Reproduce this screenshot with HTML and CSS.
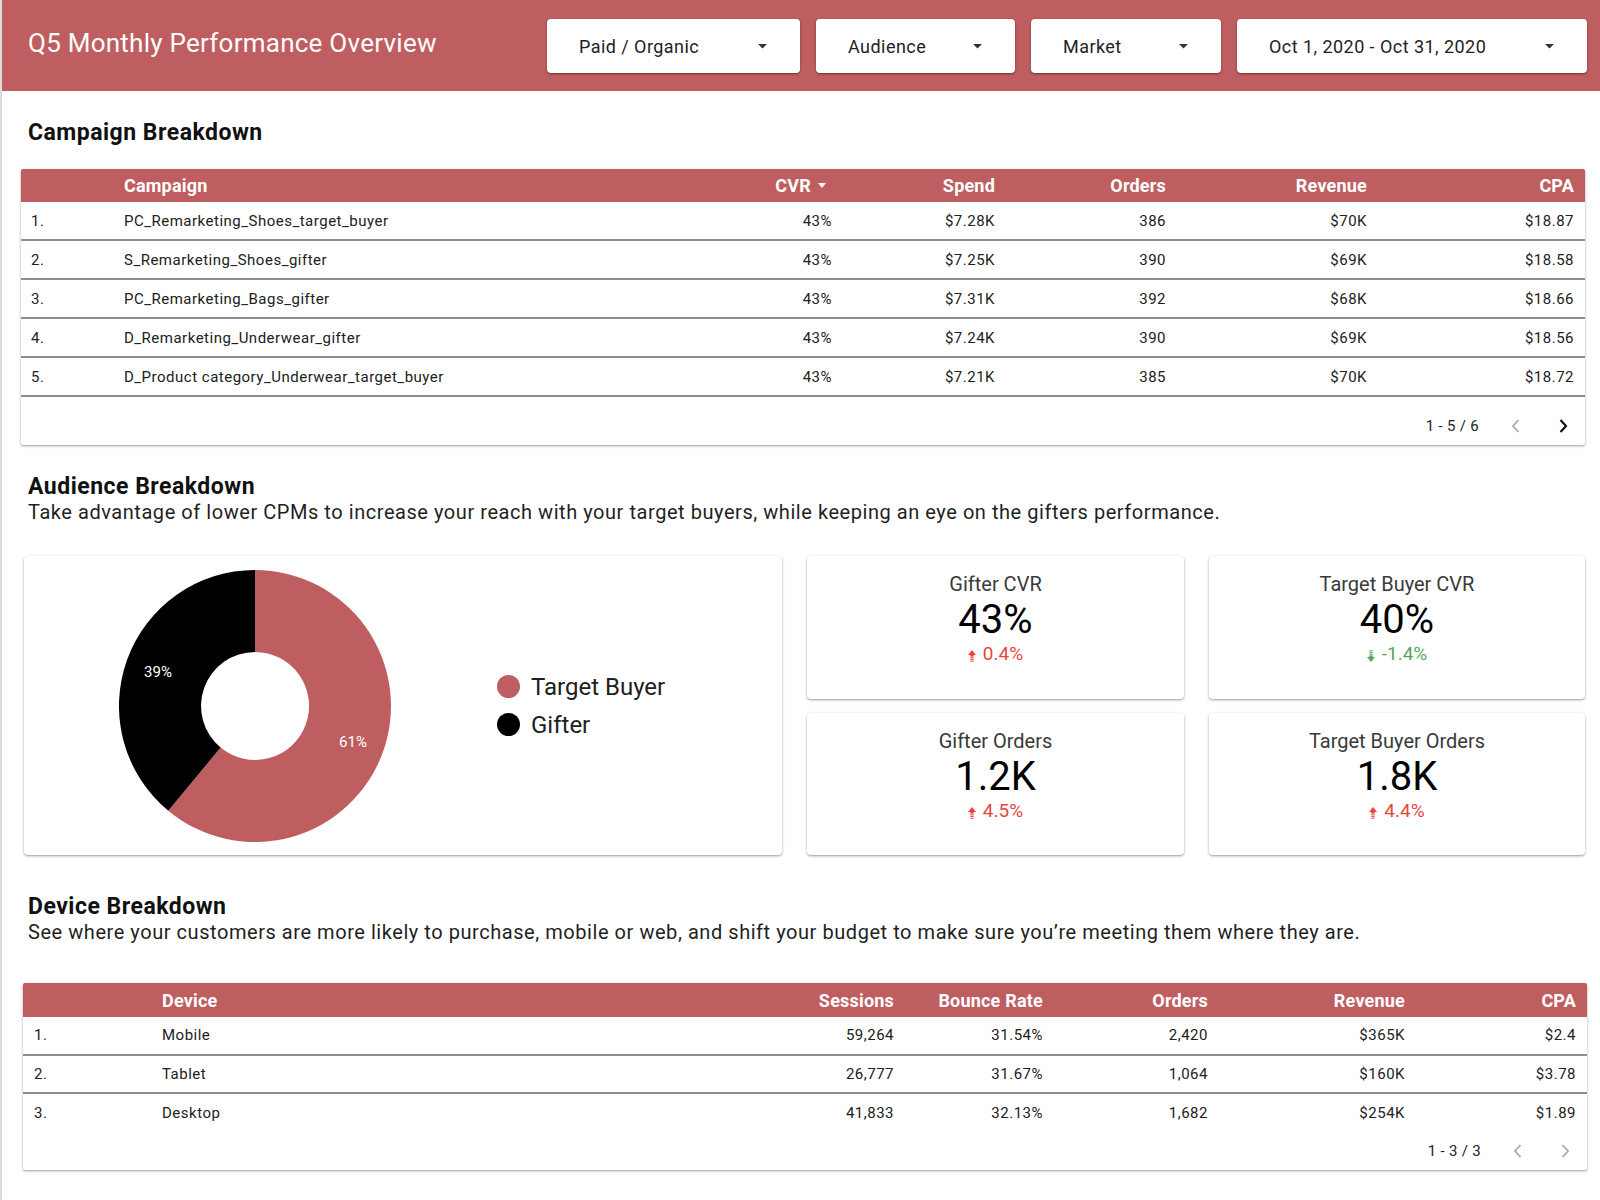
FILE: index.html
```html
<!DOCTYPE html>
<html lang="en">
<head>
<meta charset="utf-8">
<title>Q5 Monthly Performance Overview</title>
<link rel="stylesheet" href="styles.css">
</head>
<body>
<div class="page">
  <header class="topbar">
    <h1 class="app-title">Q5 Monthly Performance Overview</h1>
    <div class="filters">
      <div class="dropdown dd-paid"><span>Paid / Organic</span><svg class="dd-arrow" width="9" height="5" viewBox="0 0 9 5"><path d="M0 0L4.5 4.5L9 0Z"/></svg></div>
      <div class="dropdown dd-aud"><span>Audience</span><svg class="dd-arrow" width="9" height="5" viewBox="0 0 9 5"><path d="M0 0L4.5 4.5L9 0Z"/></svg></div>
      <div class="dropdown dd-mkt"><span>Market</span><svg class="dd-arrow" width="9" height="5" viewBox="0 0 9 5"><path d="M0 0L4.5 4.5L9 0Z"/></svg></div>
      <div class="dropdown dd-date"><span>Oct 1, 2020 - Oct 31, 2020</span><svg class="dd-arrow" width="9" height="5" viewBox="0 0 9 5"><path d="M0 0L4.5 4.5L9 0Z"/></svg></div>
    </div>
  </header>

  <h2 class="section-title first">Campaign Breakdown</h2>
  <div class="table campaign-table">
    <div class="trow thead">
      <div></div><div class="l">Campaign</div><div class="r sort">CVR <svg width="8" height="5" viewBox="0 0 8 5"><path d="M0 0L4 5L8 0Z" fill="#fff"/></svg></div><div class="r">Spend</div><div class="r">Orders</div><div class="r">Revenue</div><div class="r">CPA</div>
    </div>
    <div class="trow line"><div>1.</div><div class="l">PC_Remarketing_Shoes_target_buyer</div><div class="r">43%</div><div class="r">$7.28K</div><div class="r">386</div><div class="r">$70K</div><div class="r">$18.87</div></div>
    <div class="trow line"><div>2.</div><div class="l">S_Remarketing_Shoes_gifter</div><div class="r">43%</div><div class="r">$7.25K</div><div class="r">390</div><div class="r">$69K</div><div class="r">$18.58</div></div>
    <div class="trow line"><div>3.</div><div class="l">PC_Remarketing_Bags_gifter</div><div class="r">43%</div><div class="r">$7.31K</div><div class="r">392</div><div class="r">$68K</div><div class="r">$18.66</div></div>
    <div class="trow line"><div>4.</div><div class="l">D_Remarketing_Underwear_gifter</div><div class="r">43%</div><div class="r">$7.24K</div><div class="r">390</div><div class="r">$69K</div><div class="r">$18.56</div></div>
    <div class="trow line"><div>5.</div><div class="l">D_Product category_Underwear_target_buyer</div><div class="r">43%</div><div class="r">$7.21K</div><div class="r">385</div><div class="r">$70K</div><div class="r">$18.72</div></div>
    <div class="tfoot tall">
      <span class="pg-text">1 - 5 / 6</span>
      <span class="chev"><svg width="24" height="24" viewBox="0 0 24 24"><polyline points="14.5,6 9,12 14.5,18" fill="none" stroke="#a8a8a8" stroke-width="1.8"/></svg></span>
      <span class="chev"><svg width="24" height="24" viewBox="0 0 24 24"><polyline points="9.5,6 15,12 9.5,18" fill="none" stroke="#111" stroke-width="2.2"/></svg></span>
    </div>
  </div>

  <h2 class="section-title">Audience Breakdown</h2>
  <p class="section-sub">Take advantage of lower CPMs to increase your reach with your target buyers, while keeping an eye on the gifters performance.</p>

  <div class="audience-grid">
    <div class="card donut-card">
      <svg class="donut" width="272" height="272" viewBox="0 0 272 272">
        <path d="M136 0 A136 136 0 1 1 49.3 240.8 L101.6 177.6 A54 54 0 1 0 136 82 Z" fill="#bf5e60"/>
        <path d="M49.3 240.8 A136 136 0 0 1 136 0 L136 82 A54 54 0 0 0 101.6 177.6 Z" fill="#000"/>
        <text x="39" y="107" class="donut-label" text-anchor="middle">39%</text>
        <text x="234" y="177" class="donut-label" text-anchor="middle">61%</text>
      </svg>
      <ul class="legend">
        <li><span class="dot red"></span>Target Buyer</li>
        <li><span class="dot black"></span>Gifter</li>
      </ul>
    </div>
    <div class="card kpi">
      <div class="kpi-label">Gifter CVR</div>
      <div class="kpi-value">43%</div>
      <div class="kpi-delta up"><svg width="8" height="12" viewBox="0 0 8 12"><path d="M0 5L4 0L8 5Z"/><rect x="2.3" y="5" width="3.4" height="1.6"/><rect x="2.3" y="7.3" width="3.4" height="1.1"/><rect x="2.3" y="9.1" width="3.4" height="1"/><rect x="2.3" y="10.8" width="3.4" height="0.9"/></svg>0.4%</div>
    </div>
    <div class="card kpi">
      <div class="kpi-label">Target Buyer CVR</div>
      <div class="kpi-value">40%</div>
      <div class="kpi-delta down"><svg width="8" height="12" viewBox="0 0 8 12"><path d="M0 7L4 12L8 7Z"/><rect x="2.3" y="5.4" width="3.4" height="1.6"/><rect x="2.3" y="3.6" width="3.4" height="1.1"/><rect x="2.3" y="1.9" width="3.4" height="1"/><rect x="2.3" y="0.3" width="3.4" height="0.9"/></svg>-1.4%</div>
    </div>
    <div class="card kpi">
      <div class="kpi-label">Gifter Orders</div>
      <div class="kpi-value">1.2K</div>
      <div class="kpi-delta up"><svg width="8" height="12" viewBox="0 0 8 12"><path d="M0 5L4 0L8 5Z"/><rect x="2.3" y="5" width="3.4" height="1.6"/><rect x="2.3" y="7.3" width="3.4" height="1.1"/><rect x="2.3" y="9.1" width="3.4" height="1"/><rect x="2.3" y="10.8" width="3.4" height="0.9"/></svg>4.5%</div>
    </div>
    <div class="card kpi">
      <div class="kpi-label">Target Buyer Orders</div>
      <div class="kpi-value">1.8K</div>
      <div class="kpi-delta up"><svg width="8" height="12" viewBox="0 0 8 12"><path d="M0 5L4 0L8 5Z"/><rect x="2.3" y="5" width="3.4" height="1.6"/><rect x="2.3" y="7.3" width="3.4" height="1.1"/><rect x="2.3" y="9.1" width="3.4" height="1"/><rect x="2.3" y="10.8" width="3.4" height="0.9"/></svg>4.4%</div>
    </div>
  </div>

  <h2 class="section-title device">Device Breakdown</h2>
  <p class="section-sub">See where your customers are more likely to purchase, mobile or web, and shift your budget to make sure you’re meeting them where they are.</p>

  <div class="table device-table">
    <div class="trow thead">
      <div></div><div class="l">Device</div><div class="r">Sessions</div><div class="r">Bounce Rate</div><div class="r">Orders</div><div class="r">Revenue</div><div class="r">CPA</div>
    </div>
    <div class="trow line"><div>1.</div><div class="l">Mobile</div><div class="r">59,264</div><div class="r">31.54%</div><div class="r">2,420</div><div class="r">$365K</div><div class="r">$2.4</div></div>
    <div class="trow line"><div>2.</div><div class="l">Tablet</div><div class="r">26,777</div><div class="r">31.67%</div><div class="r">1,064</div><div class="r">$160K</div><div class="r">$3.78</div></div>
    <div class="trow"><div>3.</div><div class="l">Desktop</div><div class="r">41,833</div><div class="r">32.13%</div><div class="r">1,682</div><div class="r">$254K</div><div class="r">$1.89</div></div>
    <div class="tfoot short">
      <span class="pg-text">1 - 3 / 3</span>
      <span class="chev"><svg width="24" height="24" viewBox="0 0 24 24"><polyline points="14.5,6 9,12 14.5,18" fill="none" stroke="#a8a8a8" stroke-width="1.8"/></svg></span>
      <span class="chev"><svg width="24" height="24" viewBox="0 0 24 24"><polyline points="9.5,6 15,12 9.5,18" fill="none" stroke="#a8a8a8" stroke-width="1.8"/></svg></span>
    </div>
  </div>
</div>
</body>
</html>
```

FILE: styles.css
```css
* { box-sizing: border-box; }

html, body {
  margin: 0;
  padding: 0;
  background: #ffffff;
}

body {
  font-family: Roboto, "Liberation Sans", Arial, sans-serif;
  color: #212121;
}

.page {
  border-left: 2px solid #dcdcdc;
  min-height: 1200px;
  padding-bottom: 20px;
}

/* ---------- top bar ---------- */
.topbar {
  height: 91px;
  background: #bf5e60;
  display: flex;
  align-items: center;
  padding: 0 13px 0 26px;
}

.app-title {
  margin: 0 0 5px 0;
  font-size: 26px;
  font-weight: 400;
  line-height: 30px;
  letter-spacing: 0.25px;
  color: #ffffff;
  white-space: nowrap;
}

.filters {
  margin-left: auto;
  display: flex;
  gap: 16px;
  padding-top: 1px;
}

.dropdown {
  height: 54px;
  background: #ffffff;
  border-radius: 4px;
  box-shadow: 0 1px 2px rgba(0, 0, 0, 0.35), 0 1px 3px rgba(0, 0, 0, 0.15);
  display: flex;
  align-items: center;
  justify-content: space-between;
  padding: 0 33px 0 32px;
  font-size: 18px;
  letter-spacing: 0.45px;
  color: #222222;
}

.dd-arrow { fill: #333333; }

.dd-paid { width: 253px; }
.dd-aud { width: 199px; }
.dd-mkt { width: 190px; }
.dd-date { width: 350px; }

/* ---------- section headings ---------- */
.section-title {
  margin: 29px 0 0 26px;
  font-size: 23px;
  font-weight: 700;
  line-height: 26px;
  letter-spacing: 0.5px;
  color: #111111;
}

.section-title.device { margin-top: 39px; }

.section-sub {
  margin: 0 0 0 26px;
  font-size: 20px;
  line-height: 24px;
  letter-spacing: 0.55px;
  color: #1f1f1f;
}

/* ---------- tables ---------- */
.table {
  width: 1564px;
  background: #ffffff;
  border-radius: 2px;
  box-shadow: 0 1px 2px rgba(0, 0, 0, 0.3), 0 1px 4px rgba(0, 0, 0, 0.12);
  overflow: hidden;
}

.campaign-table {
  margin: 23px 0 0 19px;
}

.device-table {
  margin: 39px 0 0 21px;
}

.trow {
  display: grid;
  align-items: center;
  font-size: 15px;
  letter-spacing: 0.5px;
  color: #212121;
}

.campaign-table .trow {
  grid-template-columns: 93px 1fr 140px 163px 171px 201px 207px;
  padding: 0 11px 0 10px;
  height: 39px;
}

.device-table .trow {
  grid-template-columns: 128px 1fr 140px 149px 165px 197px 171px;
  padding: 0 11px 0 11px;
  height: 38.5px;
}

.trow .r { text-align: right; }
.trow .l { text-align: left; }

.trow.line { border-bottom: 2px solid #8e8e8e; }

.trow.thead {
  background: #bf5e60;
  color: #ffffff;
  font-size: 18px;
  font-weight: 700;
  letter-spacing: 0.2px;
}

.campaign-table .trow.thead { height: 33px; }
.device-table .trow.thead { height: 34px; }

.sort {
  display: flex;
  align-items: center;
  justify-content: flex-end;
  gap: 7px;
  padding-right: 6px;
}

.tfoot {
  display: flex;
  align-items: center;
  justify-content: flex-end;
  padding-right: 10px;
  font-size: 15px;
  color: #222222;
}

.tfoot.tall { height: 48px; padding-top: 9px; }
.tfoot.short { height: 37px; }

.pg-text {
  margin-right: 25px;
  letter-spacing: 0.3px;
}

.chev {
  display: inline-flex;
  width: 24px;
  height: 24px;
}

.chev + .chev { margin-left: 23px; }

/* ---------- audience cards ---------- */
.audience-grid {
  margin: 32px 0 0 22px;
  display: grid;
  grid-template-columns: 758px 377px 376px;
  grid-template-rows: 143px 142px;
  column-gap: 25px;
  row-gap: 14px;
}

.card {
  background: #ffffff;
  border-radius: 4px;
  box-shadow: 0 1px 2px rgba(0, 0, 0, 0.3), 0 1px 4px rgba(0, 0, 0, 0.12);
}

.donut-card {
  grid-row: 1 / 3;
  display: flex;
  align-items: center;
  padding-left: 95px;
}

.donut { display: block; }

.donut-label {
  font-family: Roboto, "Liberation Sans", sans-serif;
  font-size: 15px;
  fill: #ffffff;
}

.legend {
  list-style: none;
  margin: 0 0 0 106px;
  padding: 0;
}

.legend li {
  display: flex;
  align-items: center;
  font-size: 24px;
  line-height: 38px;
  color: #212121;
}

.dot {
  width: 23px;
  height: 23px;
  border-radius: 50%;
  margin-right: 11px;
}

.dot.red { background: #bf5e60; }
.dot.black { background: #000000; }

.kpi {
  display: flex;
  flex-direction: column;
  align-items: center;
  padding-top: 16px;
}

.kpi-label {
  font-size: 20px;
  line-height: 24px;
  color: #3a3a3a;
}

.kpi-value {
  font-size: 40px;
  line-height: 48px;
  color: #000000;
}

.kpi-delta {
  display: flex;
  align-items: center;
  gap: 7px;
  font-size: 19px;
  line-height: 20px;
}

.kpi-delta svg { margin-top: 4px; }

.kpi-delta.up { color: #e8453c; fill: #e8453c; }
.kpi-delta.down { color: #55a857; fill: #55a857; }
```
